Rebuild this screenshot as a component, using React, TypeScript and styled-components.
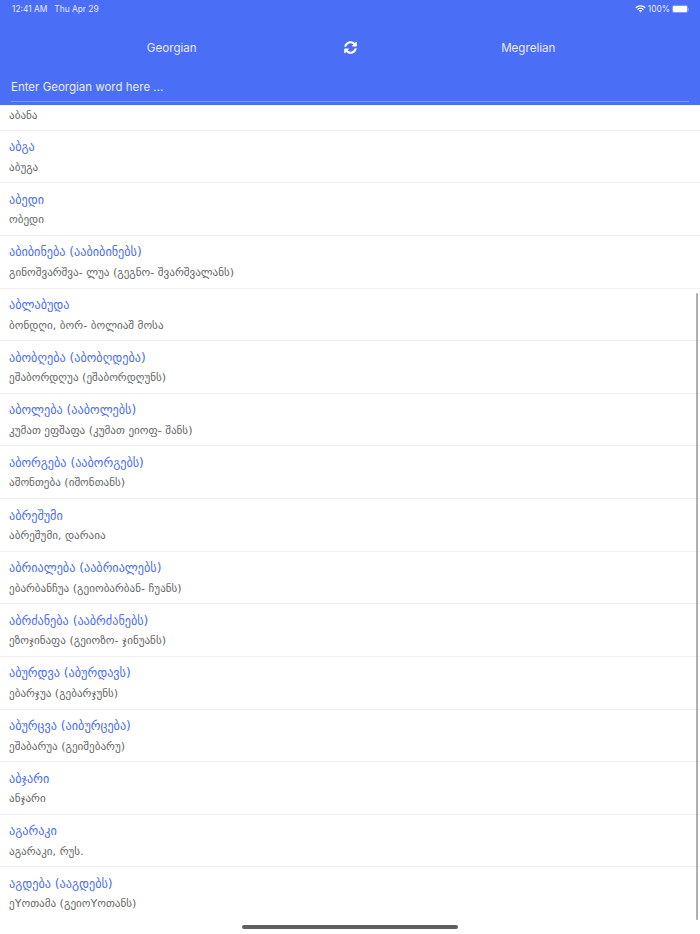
import React from 'react';
import styled, { createGlobalStyle } from 'styled-components';
import { FaSyncAlt } from 'react-icons/fa';

const GlobalStyle = createGlobalStyle`
  html, body {
    margin: 0;
    padding: 0;
    background: #fff;
  }
  * {
    box-sizing: border-box;
  }
`;

const Screen = styled.div`
  position: relative;
  width: 700px;
  height: 934px;
  overflow: hidden;
  display: flex;
  flex-direction: column;
  background: #fff;
  font-family: 'Inter', 'Liberation Sans', sans-serif;
`;

const Header = styled.header`
  flex: none;
  height: 105px;
  background: #4a6ef5;
  color: #fff;
  display: flex;
  flex-direction: column;
`;

const StatusBar = styled.div`
  height: 17px;
  padding: 1px 11px 0 12px;
  display: flex;
  align-items: center;
  justify-content: space-between;
  font-size: 8.4px;
  color: #e6ebfe;
`;

const StatusGroup = styled.div`
  display: flex;
  align-items: center;
  gap: 7px;
`;

const StatusRight = styled(StatusGroup)`
  gap: 2px;
`;

const Battery = styled.span`
  position: relative;
  display: flex;
  align-items: center;
  width: 16px;
  height: 8px;
  margin-right: 1px;
  padding: 1px;
  border-radius: 2px;
  background: #7f97f8;

  &::after {
    content: '';
    position: absolute;
    top: 2.5px;
    right: -1px;
    width: 1px;
    height: 3px;
    background: #7f97f8;
  }
`;

const BatteryFill = styled.span`
  flex: 1;
  height: 100%;
  border-radius: 1px;
  background: #fff;
`;

const LanguageRow = styled.div`
  height: 60px;
  padding-top: 1px;
  display: flex;
  align-items: center;
  font-size: 11.6px;
  color: #e6ebfe;
`;

const LanguageLabel = styled.span`
  flex: 1;
  text-align: center;
`;

const SwapIcon = styled(FaSyncAlt)`
  flex: none;
  width: 13px;
  height: 13px;
  color: #fff;
`;

const SearchField = styled.div`
  margin: 0 11px;
  height: 25px;
  padding-bottom: 5px;
  display: flex;
  align-items: center;
  font-size: 11.5px;
  color: #e6ebfe;
  border-bottom: 1px solid #8097f8;
`;

const ListViewport = styled.main`
  position: relative;
  flex: 1;
  min-height: 0;
  overflow: hidden;
`;

const List = styled.ul`
  list-style: none;
  margin: 0;
  padding: 0;
`;

const Row = styled.li<{ $clipped?: boolean }>`
  height: ${p => (p.$clipped ? '25.7px' : '52.63px')};
  padding: ${p => (p.$clipped ? '1px 9px 0' : '6.5px 9px 0')};
  border-bottom: 1px solid #f0f0f0;
  font-family: 'DejaVu Sans', sans-serif;

  &:last-child {
    border-bottom: none;
  }
`;

const Word = styled.div`
  height: 20.5px;
  line-height: 20px;
  font-size: 12.2px;
  color: #4a6ef5;
`;

const Translation = styled.div`
  height: 20px;
  line-height: 20px;
  font-size: 11.1px;
  color: #666;
`;

const ScrollThumb = styled.div`
  position: absolute;
  top: 187.5px;
  right: 2px;
  width: 2.5px;
  height: 627.5px;
  border-radius: 2px;
  background: #b0b0b0;
`;

const HomeIndicator = styled.div`
  position: absolute;
  left: 242px;
  bottom: 5px;
  width: 216px;
  height: 4px;
  border-radius: 2px;
  background: #5f5f5f;
`;

type Entry = { word: string; translation: string };

const entries: Entry[] = [
  { word: 'აბგა', translation: 'აბუგა' },
  { word: 'აბედი', translation: 'ობედი' },
  { word: 'აბიბინება (ააბიბინებს)', translation: 'გინოშვარშვა- ლუა (გეგნო- შვარშვალანს)' },
  { word: 'აბლაბუდა', translation: 'ბონდღი, ბორ- ბოლიაშ მოსა' },
  { word: 'აბობღება (აბობღდება)', translation: 'ეშაბორდღუა (ეშაბორდღუნს)' },
  { word: 'აბოლება (ააბოლებს)', translation: 'კუმათ ეფშაფა (კუმათ ეიოფ- შანს)' },
  { word: 'აბორგება (ააბორგებს)', translation: 'აშონთება (იშონთანს)' },
  { word: 'აბრეშუმი', translation: 'აბრეშუმი, დარაია' },
  { word: 'აბრიალება (ააბრიალებს)', translation: 'ებარბანჩუა (გეიობარბან- ჩუანს)' },
  { word: 'აბრძანება (ააბრძანებს)', translation: 'ეზოჯინაფა (გეიოზო- ჯინუანს)' },
  { word: 'აბურდვა (აბურდავს)', translation: 'ებარჯუა (გებარჯუნს)' },
  { word: 'აბურცვა (აიბურცება)', translation: 'ეშაბარუა (გეიშებარუ)' },
  { word: 'აბჯარი', translation: 'ანჯარი' },
  { word: 'აგარაკი', translation: 'აგარაკი, რუს.' },
  { word: 'აგდება (ააგდებს)', translation: 'ეYოთამა (გეიოYოთანს)' },
];

function WifiIcon() {
  return (
    <svg width="11" height="8" viewBox="0 0 22 16" fill="none" stroke="#fff" strokeWidth="2.6">
      <path d="M1.5 5.5a13.5 13.5 0 0 1 19 0" />
      <path d="M5 9.2a8.5 8.5 0 0 1 12 0" />
      <path d="M8.3 12.3a3.8 3.8 0 0 1 5.4 0" />
      <circle cx="11" cy="14.2" r="1" fill="#fff" stroke="none" />
    </svg>
  );
}

export default function App() {
  return (
    <Screen>
      <GlobalStyle />
      <Header>
        <StatusBar>
          <StatusGroup>
            <span>12:41 AM</span>
            <span>Thu Apr 29</span>
          </StatusGroup>
          <StatusRight>
            <WifiIcon />
            <span>100%</span>
            <Battery>
              <BatteryFill />
            </Battery>
          </StatusRight>
        </StatusBar>
        <LanguageRow>
          <LanguageLabel>Georgian</LanguageLabel>
          <SwapIcon />
          <LanguageLabel>Megrelian</LanguageLabel>
        </LanguageRow>
        <SearchField>Enter Georgian word here ...</SearchField>
      </Header>
      <ListViewport>
        <List>
          {/* first row is scrolled under the header, only its translation shows */}
          <Row $clipped>
            <Translation>აბანა</Translation>
          </Row>
          {entries.map(entry => (
            <Row key={entry.word}>
              <Word>{entry.word}</Word>
              <Translation>{entry.translation}</Translation>
            </Row>
          ))}
        </List>
        <ScrollThumb />
      </ListViewport>
      <HomeIndicator />
    </Screen>
  );
}
